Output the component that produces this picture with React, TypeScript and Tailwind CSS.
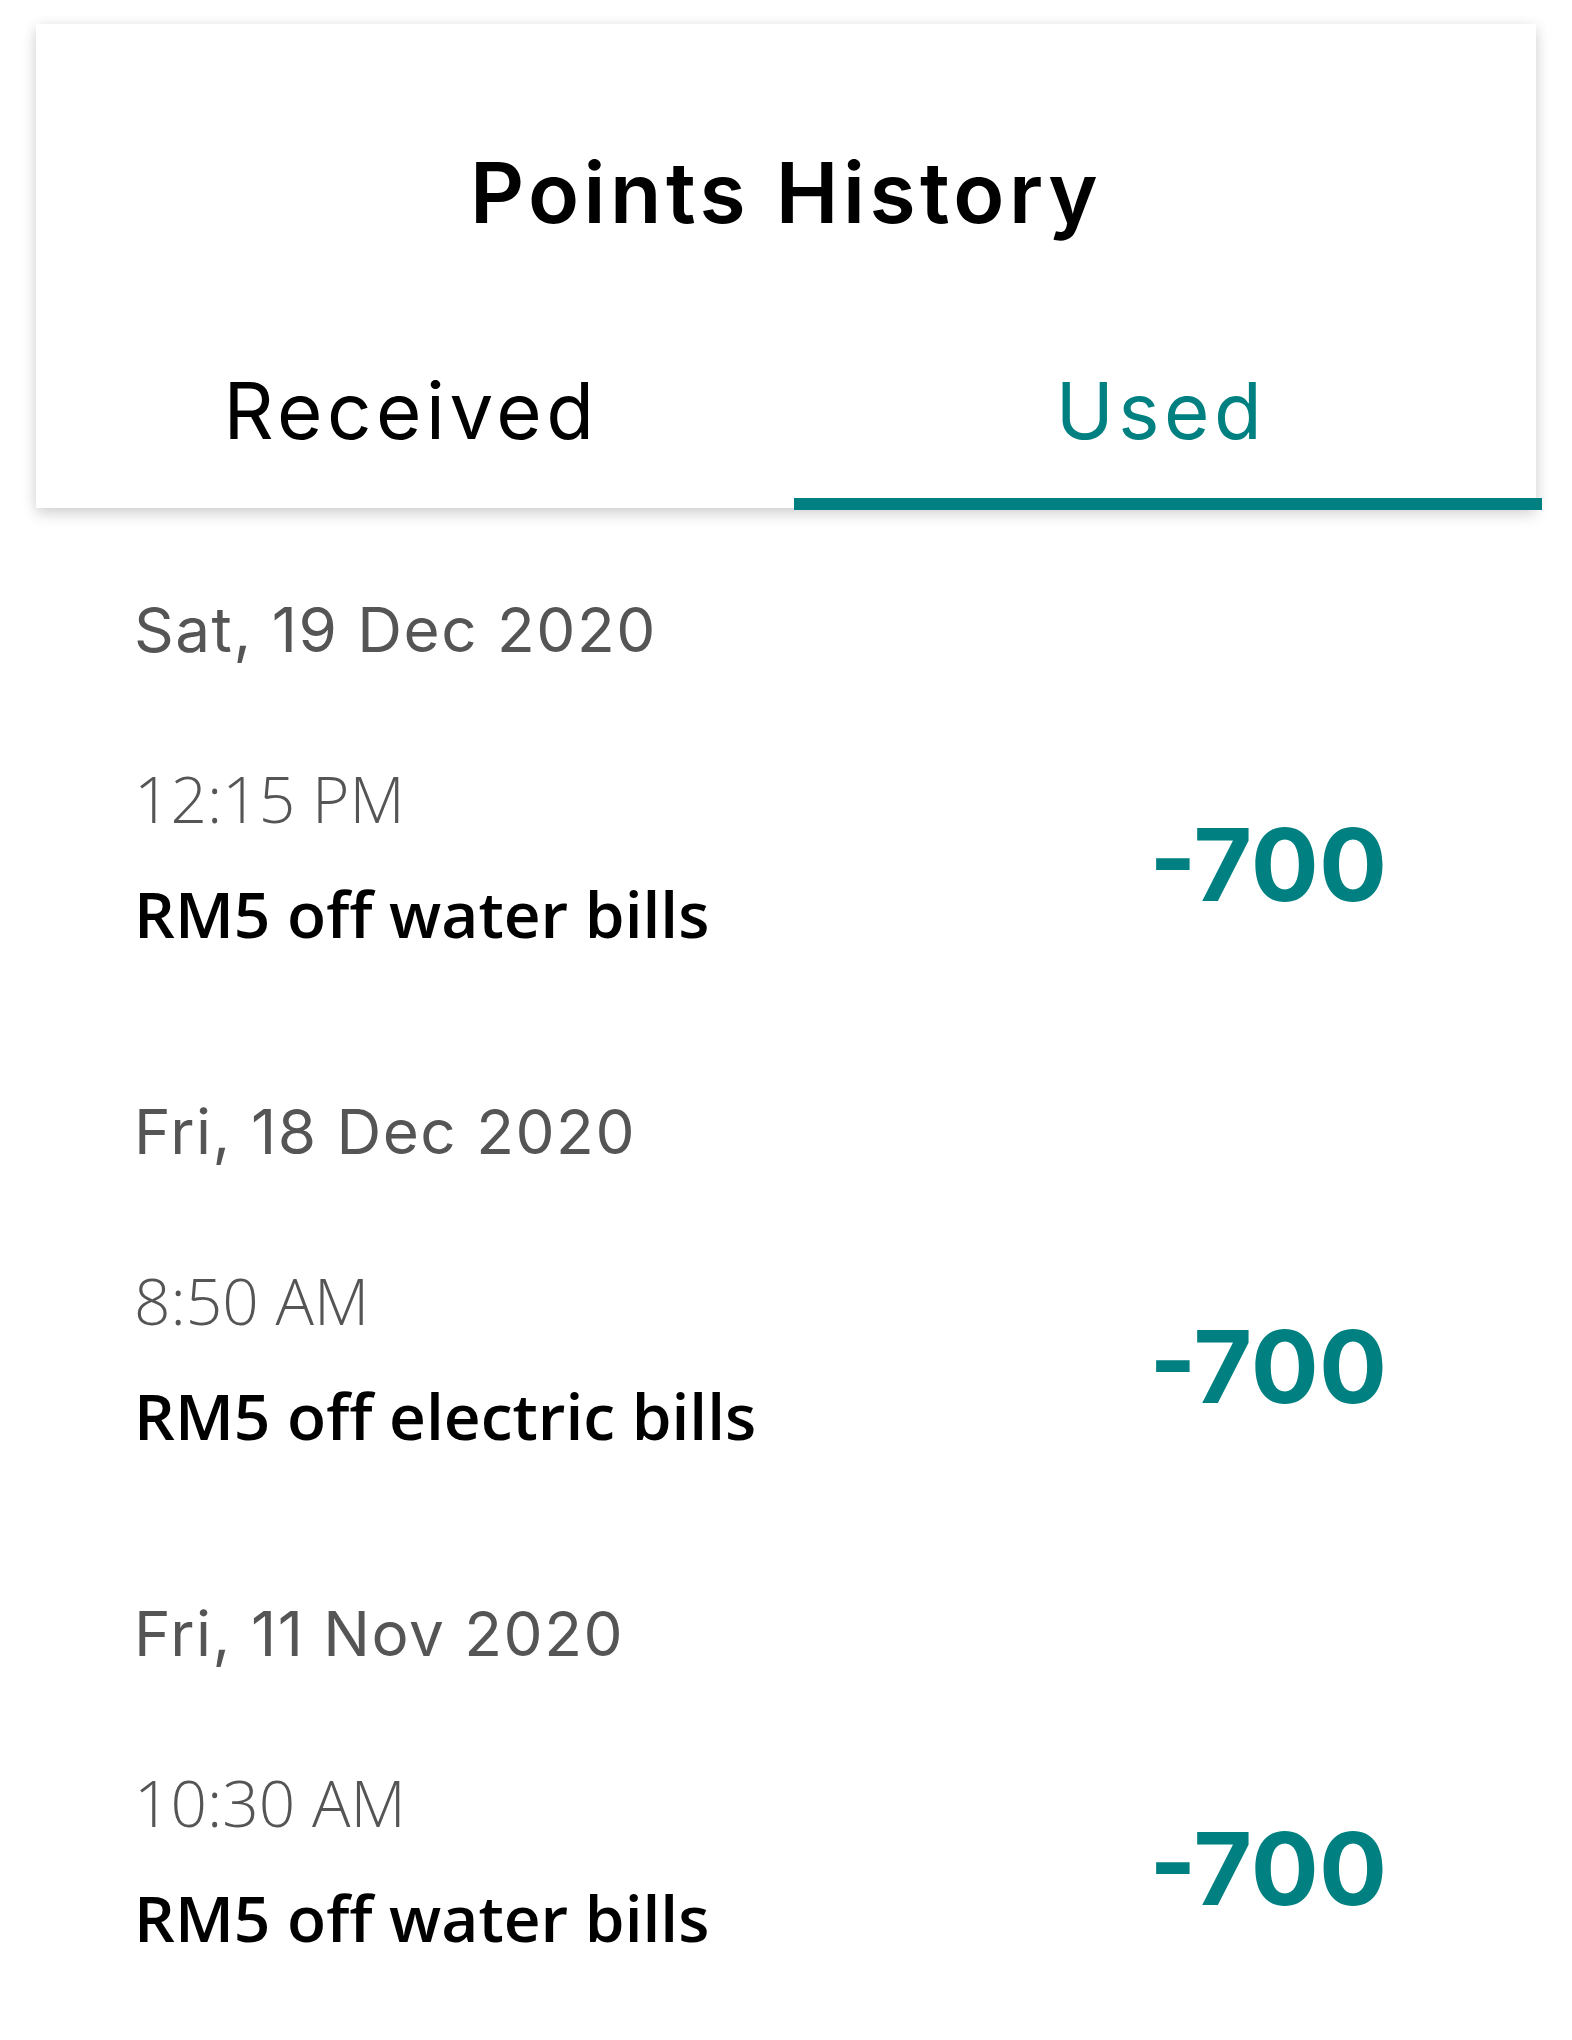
const history = [
  { date: 'Sat, 19 Dec 2020', time: '12:15 PM', title: 'RM5 off water bills', points: -700 },
  { date: 'Fri, 18 Dec 2020', time: '8:50 AM', title: 'RM5 off electric bills', points: -700 },
  { date: 'Fri, 11 Nov 2020', time: '10:30 AM', title: 'RM5 off water bills', points: -700 },
];

const head = { fontFamily: 'Inter, "Noto Sans", sans-serif' };
const body = { fontFamily: '"Open Sans", "Noto Sans", sans-serif' };

export default function App() {
  return (
    <div className="min-h-[2040px] w-full bg-white overflow-hidden">
      {/* header card with tabs */}
      <div className="mx-[36px] mt-[24px] w-[1500px] bg-white shadow-[0_6px_14px_rgba(0,0,0,0.16),0_0_14px_rgba(0,0,0,0.05)]">
        <h1 style={head} className="pt-[127px] text-center text-[84px] leading-none font-semibold tracking-[4.5px] text-black">
          Points History
        </h1>
        <div className="mt-[137px] grid grid-cols-2">
          <div className="flex flex-col">
            <span style={head} className="text-center text-[78px] leading-none font-normal tracking-[4.5px] text-black">Received</span>
            <div className="mt-[48px] h-[12px] -mb-[2px]" />
          </div>
          <div className="flex flex-col">
            <span style={head} className="text-center text-[78px] leading-none font-normal tracking-[4.5px] text-[#008080]">Used</span>
            <div className="mt-[48px] h-[12px] -mb-[2px] ml-[8px] -mr-[6px] bg-[#008080]" />
          </div>
        </div>
      </div>

      {/* list */}
      <div className="mt-[91px] pl-[134px] pr-[185px] flex flex-col">
        {history.map((item, i) => (
          <div key={i} className={i > 0 ? 'mt-[155px]' : ''}>
            <div style={head} className="text-[62px] leading-none font-normal tracking-[1.5px] text-[#555555]">
              {item.date}
            </div>
            <div className="mt-[106px] flex items-start justify-between">
              <div className="flex flex-col">
                <span style={body} className="text-[64px] leading-none font-light text-[#555555]">
                  {item.time}
                </span>
                <span style={body} className="mt-[51px] text-[64px] leading-none font-semibold text-black">
                  {item.title}
                </span>
              </div>
              <span style={head} className="mt-[47px] text-[101px] leading-none font-bold text-[#008080]">
                {item.points}
              </span>
            </div>
          </div>
        ))}
      </div>
    </div>
  );
}
